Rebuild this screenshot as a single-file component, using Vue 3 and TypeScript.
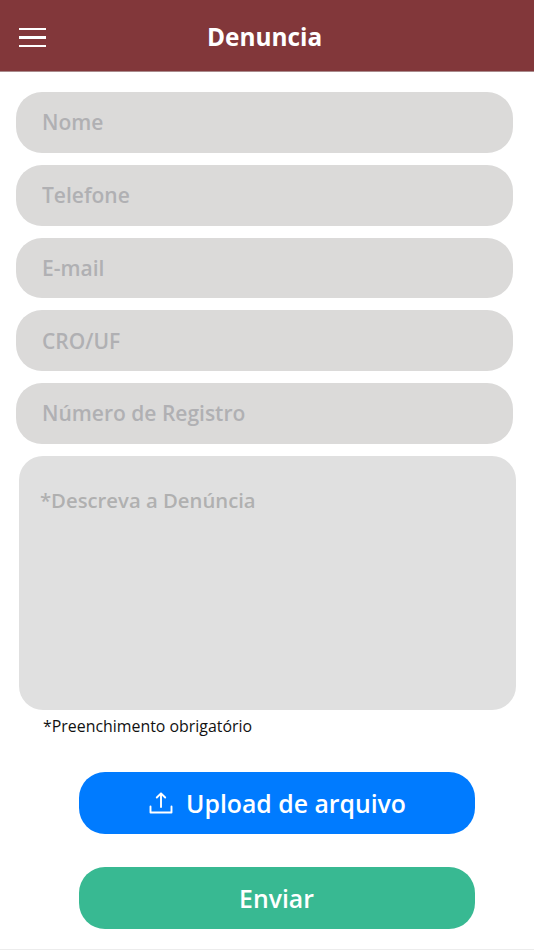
<script setup lang="ts">
const fields: string[] = ['Nome', 'Telefone', 'E-mail', 'CRO/UF', 'Número de Registro']
</script>

<template>
  <div class="page">
    <header class="bar">
      <button class="menu" type="button" aria-label="Menu">
        <span></span><span></span><span></span>
      </button>
      <h1 class="title">Denuncia</h1>
    </header>
    <form class="form" @submit.prevent>
      <div class="fields">
        <input v-for="f in fields" :key="f" class="field" type="text" :placeholder="f" />
      </div>
      <textarea class="area" placeholder="*Descreva a Denúncia"></textarea>
      <p class="note">*Preenchimento obrigatório</p>
      <button class="btn upload" type="button">
        <svg class="icon" viewBox="0 0 24 24" fill="none" stroke="#fff" stroke-width="1.9" stroke-linecap="round" stroke-linejoin="round">
          <path d="M12 16V2.5M7.8 6.5 12 2.3l4.2 4.2" />
          <path d="M1.5 15.5v6h21v-6" />
        </svg>
        <span>Upload de arquivo</span>
      </button>
      <button class="btn send" type="submit">Enviar</button>
    </form>
  </div>
</template>

<style scoped>
.page {
  width: 534px;
  height: 950px;
  overflow: hidden;
  background: #fff;
  font-family: "Open Sans", "Liberation Sans", sans-serif;
  border-bottom: 1px solid #ececec;
  box-sizing: border-box;
}
.bar {
  height: 72px;
  box-sizing: border-box;
  background: #82373a;
  border-bottom: 1px solid #a98a8b;
  display: flex;
  align-items: center;
  padding: 4px 0 0 19px;
}
.menu {
  width: 27px;
  height: 19px;
  margin: 0;
  padding: 0;
  border: 0;
  background: none;
  display: flex;
  flex-direction: column;
  justify-content: space-between;
}
.menu span {
  display: block;
  height: 2.4px;
  background: #fff;
}
.title {
  margin: 0 0 2px 161px;
  color: #fff;
  font-size: 24.4px;
  line-height: 32px;
  font-weight: 700;
}
.form {
  display: flex;
  flex-direction: column;
  padding-top: 20px;
}
.fields {
  display: flex;
  flex-direction: column;
  gap: 12px;
  margin-left: 16px;
}
.field {
  width: 497px;
  height: 60.75px;
  box-sizing: border-box;
  border: 0;
  outline: 0;
  border-radius: 26px;
  background: #dbdad9;
  padding: 0 0 0 26px;
  font: 600 21px "Open Sans", sans-serif;
  color: #333;
}
.field::placeholder {
  color: #b0b0b3;
  opacity: 1;
}
.area {
  display: block;
  width: 497px;
  height: 254px;
  margin: 12px 0 0 19px;
  box-sizing: border-box;
  border: 0;
  outline: 0;
  resize: none;
  border-radius: 24px;
  background: #e0e0e0;
  padding: 30px 21px;
  font: 600 20.3px/28px "Open Sans", sans-serif;
}
.area::placeholder {
  color: #b0b0b0;
  opacity: 1;
}
.note {
  margin: 6px 0 0 43px;
  font-size: 15.9px;
  line-height: 20px;
  color: #111;
}
.btn {
  width: 396px;
  height: 62px;
  margin-left: 79px;
  border: 0;
  border-radius: 26px;
  color: #fff;
  font: 600 24.8px "Open Sans", sans-serif;
  display: flex;
  align-items: center;
  justify-content: center;
}
.upload {
  margin-top: 36px;
  background: #007bff;
  gap: 13px;
  padding: 0 0 0 1px;
}
.send {
  margin-top: 33px;
  padding: 0 1px 0 0;
  background: #38b992;
}
.icon {
  width: 24px;
  height: 24px;
  flex: none;
}
</style>
